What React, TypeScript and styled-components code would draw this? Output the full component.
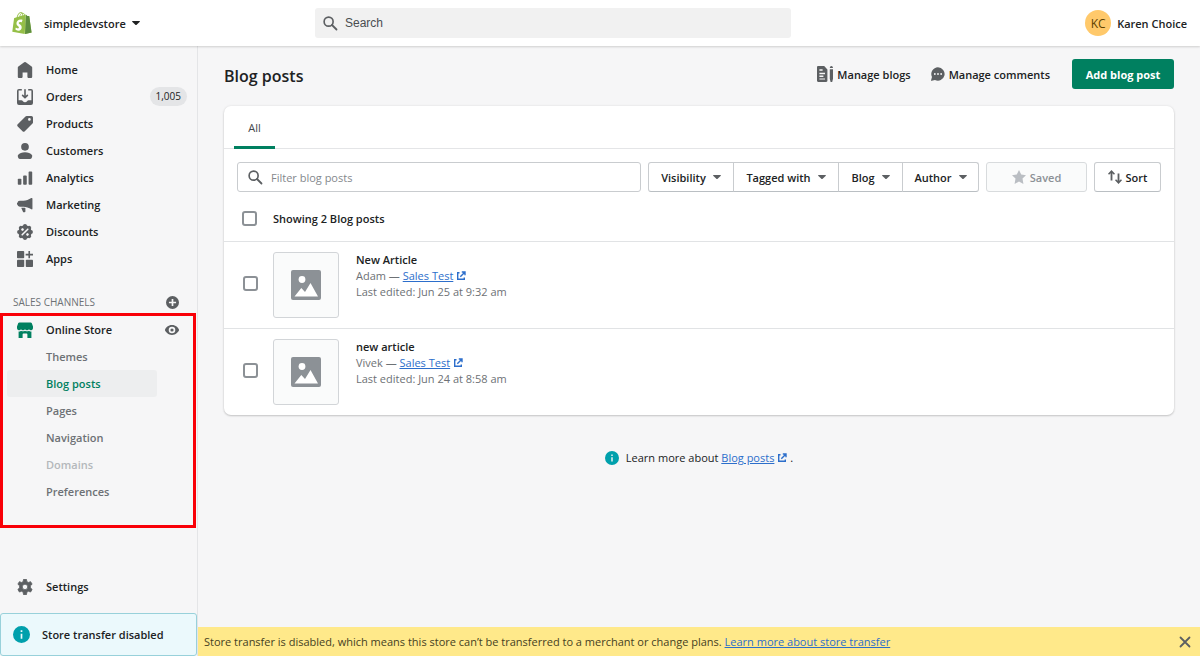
import React from "react";
import styled, { createGlobalStyle, css } from "styled-components";
import { SiShopify } from "react-icons/si";

const Global = createGlobalStyle`
  *, *::before, *::after { box-sizing: border-box; }
  body {
    margin: 0;
    background: #f6f6f7;
    color: #202223;
    font: 400 11px/17px "Open Sans", "Noto Sans", sans-serif;
  }
  button, input { font: inherit; color: inherit; }
  button { cursor: pointer; }
  svg { display: block; flex: none; }
  h1, h2, p, ul { margin: 0; padding: 0; }
  ul { list-style: none; }
`;

const Page = styled.div`
  min-height: 100vh;
  display: grid;
  grid-template: auto 1fr / 198px minmax(0, 1fr);
`;

/* Top bar */
const TopBar = styled.header`
  grid-column: 1 / -1;
  height: 46px;
  display: flex;
  align-items: center;
  padding-right: 13px;
  background: #fff;
  box-shadow: 0 1px 2px rgba(0, 0, 0, 0.16);
  z-index: 1;
`;
const StoreButton = styled.button`
  flex: 0 0 315px;
  display: flex;
  align-items: center;
  padding: 0 0 0 11px;
  border: 0;
  background: none;
  font-weight: 600;
  gap: 6px;
`;
const StoreName = styled.span`
  padding-left: 5px;
`;
const SearchField = styled.label`
  flex: 0 1 476px;
  height: 30px;
  display: flex;
  align-items: center;
  gap: 7px;
  padding: 0 8px;
  border-radius: 3px;
  background: #f1f1f1;
  color: #5c5f62;
`;
const SearchInput = styled.input`
  flex: 1;
  min-width: 0;
  border: 0;
  padding: 0;
  outline: 0;
  background: none;
  font: 12px "Liberation Sans", Arial, sans-serif;
  &::placeholder { color: #4a4d50; opacity: 1; }
`;
const UserButton = styled.button`
  margin-left: auto;
  display: flex;
  align-items: center;
  gap: 6px;
  padding: 0;
  border: 0;
  background: none;
  font-weight: 600;
`;
const Avatar = styled.span`
  width: 26px;
  height: 26px;
  border-radius: 50%;
  display: grid;
  place-items: center;
  background: #ffc96b;
  color: #5e4200;
  font-size: 12px;
  font-weight: 400;
`;

/* Sidebar */
const Sidebar = styled.nav`
  display: flex;
  flex-direction: column;
  padding-top: 10px;
  border-right: 1px solid #e4e5e7;
`;
const NavLink = styled.a<{ $tone?: "sub" | "active" | "disabled" }>`
  height: 27px;
  display: flex;
  align-items: center;
  gap: 13px;
  padding: 0 10px 0 17px;
  color: #202223;
  font-weight: 600;
  text-decoration: none;
  > svg { color: #5c5f62; }
  ${(p) =>
    p.$tone &&
    css`
      margin: 0 36px 0 4px;
      padding: 0 0 0 39px;
      border-radius: 3px;
      color: ${{ sub: "#6d7175", active: "#008060", disabled: "#b4b8bb" }[p.$tone]};
      background: ${p.$tone === "active" ? "#edeeef" : "none"};
    `}
`;
const Badge = styled.span`
  margin-left: auto;
  padding: 1px 6px;
  border-radius: 10px;
  background: #e4e5e7;
  font-size: 10px;
  font-weight: 400;
`;
const SectionHead = styled.div`
  height: 21px;
  margin-top: 20px;
  padding: 0 18px 0 13px;
  display: flex;
  align-items: center;
  justify-content: space-between;
  color: #6d7175;
`;
const SectionTitle = styled.h2`
  font-size: 10px;
  font-weight: 400;
`;
const IconButton = styled.button`
  padding: 0;
  border: 0;
  background: none;
  color: #5c5f62;
`;
const Highlight = styled.section`
  height: 215px;
  margin-right: 1px;
  border: 3px solid #f90007;
`;
const ChannelRow = styled.div`
  display: flex;
  align-items: center;
  justify-content: space-between;
  padding-right: 14px;
  > a { padding-left: 14px; }
  > a > svg { color: #008060; }
`;
const SidebarFoot = styled.div`
  margin-top: auto;
  display: grid;
  gap: 13px;
`;
const TransferNote = styled.div`
  height: 43px;
  display: flex;
  align-items: center;
  gap: 12px;
  padding: 0 12px;
  border: 1px solid #98d1da;
  border-radius: 3px;
  background: #ebf9fc;
  font-weight: 600;
  > svg { color: #00a0ac; }
`;

/* Main column */
const Main = styled.main`
  display: flex;
  flex-direction: column;
`;
const Content = styled.div`
  flex: 1;
  padding: 13px 26px;
`;
const TitleRow = styled.div`
  height: 30px;
  display: flex;
  align-items: center;
  gap: 20px;
`;
const Title = styled.h1`
  margin-right: auto;
  padding-top: 4px;
  font-size: 16px;
  line-height: 24px;
  font-weight: 600;
`;
const ActionLink = styled.a`
  display: flex;
  align-items: center;
  gap: 4px;
  color: #202223;
  font-weight: 600;
  text-decoration: none;
  > svg { color: #5c5f62; }
`;
const PrimaryButton = styled.button`
  min-width: 102px;
  height: 30px;
  margin-left: 2px;
  padding: 0 12px;
  border: 0;
  border-radius: 3px;
  background: #008060;
  color: #fff;
  font-weight: 700;
`;
const Card = styled.section`
  margin-top: 17px;
  border-radius: 7px;
  background: #fff;
  box-shadow: 0 0 3px rgba(23, 24, 24, 0.08), 0 1px 2px rgba(0, 0, 0, 0.18);
`;
const Tabs = styled.div`
  height: 43px;
  display: flex;
  padding-left: 10px;
  border-bottom: 1px solid #e4e5e7;
`;
const Tab = styled.button`
  width: 41px;
  height: 43px;
  padding: 3px 0 0;
  border: 0;
  border-bottom: 3px solid #008060;
  border-radius: 2px 2px 0 0;
  background: none;
  color: #44474a;
`;
const Filters = styled.div`
  display: flex;
  gap: 7px;
  padding: 13px 13px 11px;
`;
const FilterField = styled.label`
  flex: 1;
  min-width: 0;
  height: 30px;
  display: flex;
  align-items: center;
  gap: 8px;
  padding: 0 10px;
  border: 1px solid #c9cccf;
  border-radius: 3px;
  color: #5c5f62;
`;
const FilterInput = styled.input`
  flex: 1;
  min-width: 0;
  padding: 0;
  border: 0;
  outline: 0;
  background: none;
  &::placeholder { color: #84888c; opacity: 1; }
`;
const ButtonGroup = styled.div`
  display: flex;
  > button { margin-left: -1px; border-radius: 0; }
  > button:first-child { margin-left: 0; border-radius: 3px 0 0 3px; }
  > button:last-child { border-radius: 0 3px 3px 0; }
`;
const ToolButton = styled.button<{ $width: number }>`
  width: ${(p) => p.$width}px;
  height: 30px;
  display: flex;
  align-items: center;
  justify-content: center;
  gap: 7px;
  padding: 0;
  border: 1px solid #c9cccf;
  border-bottom-color: #babfc3;
  border-radius: 3px;
  background: #fff;
  font-weight: 600;
  white-space: nowrap;
  > svg { color: #5c5f62; }
  &:disabled {
    border-color: #d8dbdd;
    background: #fafbfb;
    color: #8c9196;
    cursor: default;
    > svg { color: #babec3; }
  }
`;
const IconToolButton = styled(ToolButton)`
  gap: 4px;
`;
const Check = styled.input.attrs({ type: "checkbox" })`
  appearance: none;
  flex: none;
  width: 15px;
  height: 15px;
  margin: 0;
  border: 2px solid #8c9196;
  border-radius: 3px;
  background: #fff;
  &:checked { background: #008060; border-color: #008060; }
`;
const SelectAll = styled.label`
  height: 38px;
  display: flex;
  align-items: center;
  gap: 16px;
  padding: 0 18px 7px;
  font-weight: 600;
`;
const PostRow = styled.li`
  display: flex;
  align-items: center;
  padding: 10px 19px;
  border-top: 1px solid #e1e3e5;
  > input { margin-bottom: 3px; }
`;
const Thumb = styled.div`
  width: 66px;
  height: 66px;
  margin: 0 17px 0 15px;
  display: grid;
  place-items: center;
  border: 1px solid #d2d5d8;
  border-radius: 3px;
  background: #fafbfb;
  color: #8c9196;
`;
const PostText = styled.div`
  align-self: flex-start;
  line-height: 16px;
  color: #6d7175;
`;
const PostTitle = styled.h2`
  font: inherit;
  font-weight: 600;
  color: #202223;
`;
const TextLink = styled.a`
  color: #2c6ecb;
  text-decoration: underline;
  > svg {
    display: inline-block;
    margin-left: 3px;
    vertical-align: -1px;
  }
`;
const HelpRow = styled.p`
  margin-top: 34px;
  display: flex;
  align-items: center;
  justify-content: center;
  gap: 7px;
  > svg { color: #00a0ac; }
`;
const Banner = styled.div`
  height: 29px;
  display: flex;
  align-items: center;
  justify-content: space-between;
  padding: 0 8px 0 6px;
  background: #ffe98a;
  color: #45411f;
`;

/* Icons, drawn on a 20 unit grid */
type IconProps = { size?: number; children: React.ReactNode };
const Icon = ({ size = 16, children }: IconProps) => (
  <svg width={size} height={size} viewBox="0 0 20 20" fill="currentColor" fillRule="evenodd" aria-hidden="true">
    {children}
  </svg>
);
const Caret = () => (
  <svg width="8" height="4" viewBox="0 0 8 4" fill="currentColor" aria-hidden="true">
    <path d="M.6 0h6.8c.5 0 .7.5.4.8L4.4 3.9a.6.6 0 0 1-.8 0L.2.8C-.1.5.1 0 .6 0z" />
  </svg>
);
const SearchIcon = () => (
  <svg width="15" height="15" viewBox="0 0 20 20" fill="none" stroke="currentColor" aria-hidden="true">
    <circle cx="7.5" cy="7.5" r="6" strokeWidth="2.2" />
    <path d="M12 12l6 6" strokeWidth="2.4" strokeLinecap="round" />
  </svg>
);
const InfoIcon = ({ size }: { size: number }) => (
  <Icon size={size}>
    <path d="M10 0a10 10 0 1 0 0 20 10 10 0 0 0 0-20zM9 5h2v2H9zm0 4h2v6H9z" />
  </Icon>
);
const ExternalIcon = () => (
  <svg width="10" height="10" viewBox="0 0 10 10" fill="none" stroke="currentColor" strokeWidth="1.4" aria-hidden="true">
    <path d="M3.5 1.700H1.700v6.600h6.600V6.600M4.300 5.700L8.500 1.500M5.800 1h3.200v3.200" />
  </svg>
);
const ImageIcon = () => (
  <svg width="30" height="30" viewBox="0 0 30 30" aria-hidden="true">
    <rect width="30" height="30" rx="2" fill="currentColor" />
    <circle cx="11" cy="9.5" r="3.4" fill="#fff" />
    <path d="M3.500 26.500l6.800-8.500 3.700 4 5.500-9 7.500 13.500z" fill="#fff" />
  </svg>
);
const ShopLogo = () => (
  <svg width="22" height="24" viewBox="0 0 24 24" aria-hidden="true">
    <path d="M5 8h9v13H5z" fill="#fff" />
    <SiShopify size={24} color="#95bf47" />
    <path
      fill="#5e8e3e"
      d="M15.337 23.979l7.216-1.561S19.949 4.805 19.928 4.688c-.018-.116-.114-.192-.211-.192s-1.929-.136-1.929-.136-1.275-1.274-1.439-1.411c-.045-.037-.075-.057-.121-.074l-.914 21.104z"
    />
  </svg>
);

const eight = [0, 45, 90, 135, 180, 225, 270, 315];
const glyphs = {
  home: <path d="M19 6.800V18.300c0 .9-.7 1.700-1.700 1.700h-2.600c-.9 0-1.700-.7-1.700-1.700V13H7v5.300c0 .9-.7 1.700-1.700 1.700H2.700C1.700 20 1 19.300 1 18.300V6.800c0-.5.3-1 .7-1.300L9 .4a1.700 1.700 0 0 1 2 0l7.300 5.100c.4.3.7.800.7 1.300z" />,
  orders: (
    <>
      <path d="M11 1a1 1 0 1 0-2 0v7.586L7.707 7.293a1 1 0 0 0-1.414 1.414l3 3a1 1 0 0 0 1.414 0l3-3a1 1 0 0 0-1.414-1.414L11 8.586V1z" />
      <path d="M2.500 0A2.500 2.500 0 0 0 0 2.500v15A2.500 2.500 0 0 0 2.500 20h15a2.500 2.500 0 0 0 2.500-2.500v-15A2.500 2.500 0 0 0 17.500 0H14v2h4v12h-3.500c-.8 0-1.400.7-1.900 1.200-.7.800-1.500 1.300-2.600 1.300s-1.900-.5-2.600-1.300C6.900 14.700 6.300 14 5.500 14H2V2h4V0z" />
    </>
  ),
  products: <path d="M10.600.6A2 2 0 0 1 12 0h6a2 2 0 0 1 2 2v6a2 2 0 0 1-.6 1.400l-9.700 9.700a2 2 0 0 1-2.800 0l-6-6a2 2 0 0 1 0-2.800zM15.500 6a1.700 1.700 0 1 0 0-3.400 1.700 1.700 0 0 0 0 3.400z" />,
  customers: (
    <>
      <circle cx="10" cy="4.8" r="4.8" />
      <path d="M1.600 14.600C3.100 13.300 6 11.600 10 11.600s6.900 1.700 8.400 3c.6.500.8 1.300.6 2.100l-.4 1.500A2.200 2.200 0 0 1 16.500 20h-13a2.200 2.200 0 0 1-2.100-1.800L1 16.700c-.2-.8 0-1.600.6-2.100z" />
    </>
  ),
  analytics: (
    <>
      <rect x="1" y="11" width="4.5" height="7.5" rx="1" />
      <rect x="7.7" y="7" width="4.5" height="11.5" rx="1" />
      <rect x="14.5" y="2" width="4.5" height="16.5" rx="1" />
    </>
  ),
  marketing: (
    <>
      <path d="M18.400 1.100a.9.900 0 0 1 .9.900v12.600a.9.900 0 0 1-1.300.8c-3.200-2-6.500-3-10-3.200H3.500A3.300 3.300 0 0 1 .4 9.500H0v-2h.4a3.300 3.300 0 0 1 3.100-2.700H8c3.500-.3 6.700-1.400 9.900-3.500z" />
      <path d="M5.500 13.500h3c.7 0 1.300.1 2 .2v4.500c0 .6-.4 1-1 1h-1a1 1 0 0 1-.9-.6L5.500 14z" />
    </>
  ),
  discounts: (
    <>
      <circle cx="10" cy="10" r="8.3" />
      {eight.map((a) => (
        <circle key={a} cx="10" cy="2.6" r="2.5" transform={`rotate(${a} 10 10)`} />
      ))}
      <g fill="#f6f6f7" stroke="#f6f6f7">
        <circle cx="6.9" cy="6.9" r="1.2" />
        <circle cx="13.1" cy="13.1" r="1.2" />
        <path d="M6.500 13.500l7-7" strokeWidth="2" strokeLinecap="round" />
      </g>
    </>
  ),
  apps: (
    <>
      <rect x="0" y="0" width="9" height="9" rx="1" />
      <rect x="0" y="11" width="9" height="9" rx="1" />
      <rect x="11" y="11" width="9" height="9" rx="1" />
      <path d="M14.300 0h2v3.500h3.700v2h-3.700V9h-2V5.500h-3.500v-2h3.500z" />
    </>
  ),
  store: (
    <>
      <path d="M3 .5h14c.6 0 1.100.3 1.400.8L20 5.500v2.200a2.700 2.700 0 0 1-5 1.300 2.900 2.900 0 0 1-5 0 2.900 2.900 0 0 1-5 0 2.700 2.700 0 0 1-5-1.300V5.500l1.600-4.200C1.900.8 2.400.5 3 .5z" />
      <path d="M2 12c1.200 0 2.300-.4 3-1.200a4.500 4.500 0 0 0 5 0 4.500 4.500 0 0 0 5 0c.8.800 1.800 1.200 3 1.200v8h-5v-4.500c0-.6-.4-1-1-1H8c-.6 0-1 .4-1 1V20H2z" />
    </>
  ),
  settings: (
    <path d="M8.200.4h3.600l.6 2.900 1.800 1 2.800-1 1.900 3.200-2.200 2v2.500l2.200 2-1.900 3.300-2.800-1-1.800 1-.6 3.300H8.200l-.6-3.300-1.800-1-2.800 1L1.100 13l2.200-2V8.500l-2.200-2L3 3.300l2.800 1 1.800-1zM10 6.500a3.400 3.400 0 1 0 0 6.800 3.400 3.400 0 0 0 0-6.800z" stroke="currentColor" strokeLinejoin="round" />
  ),
};

const mainNav: { label: string; icon: keyof typeof glyphs; badge?: string }[] = [
  { label: "Home", icon: "home" },
  { label: "Orders", icon: "orders", badge: "1,005" },
  { label: "Products", icon: "products" },
  { label: "Customers", icon: "customers" },
  { label: "Analytics", icon: "analytics" },
  { label: "Marketing", icon: "marketing" },
  { label: "Discounts", icon: "discounts" },
  { label: "Apps", icon: "apps" },
];
const storeNav: { label: string; tone: "sub" | "active" | "disabled" }[] = [
  { label: "Themes", tone: "sub" },
  { label: "Blog posts", tone: "active" },
  { label: "Pages", tone: "sub" },
  { label: "Navigation", tone: "sub" },
  { label: "Domains", tone: "disabled" },
  { label: "Preferences", tone: "sub" },
];
const filters = [
  { label: "Visibility", width: 86 },
  { label: "Tagged with", width: 106 },
  { label: "Blog", width: 65 },
  { label: "Author", width: 77 },
];
const posts = [
  { title: "New Article", author: "Adam", edited: "Jun 25 at 9:32 am" },
  { title: "new article", author: "Vivek", edited: "Jun 24 at 8:58 am" },
];

export default function App() {
  return (
    <>
      <Global />
      <Page>
        <TopBar>
          <StoreButton>
            <ShopLogo />
            <StoreName>simpledevstore</StoreName>
            <Caret />
          </StoreButton>
          <SearchField>
            <SearchIcon />
            <SearchInput type="text" placeholder="Search" aria-label="Search" />
          </SearchField>
          <UserButton>
            <Avatar>KC</Avatar>
            Karen Choice
          </UserButton>
        </TopBar>

        <Sidebar aria-label="Main">
          <ul>
            {mainNav.map((item) => (
              <li key={item.label}>
                <NavLink href="#">
                  <Icon>{glyphs[item.icon]}</Icon>
                  {item.label}
                  {item.badge && <Badge>{item.badge}</Badge>}
                </NavLink>
              </li>
            ))}
          </ul>
          <SectionHead>
            <SectionTitle>SALES CHANNELS</SectionTitle>
            <IconButton aria-label="Add sales channel">
              <Icon size={13}>
                <path d="M10 0a10 10 0 1 0 0 20 10 10 0 0 0 0-20zM8.700 4.500h2.600v4.200h4.200v2.600h-4.200v4.200H8.700v-4.200H4.500V8.700h4.200z" />
              </Icon>
            </IconButton>
          </SectionHead>
          <Highlight>
            <ChannelRow>
              <NavLink href="#">
                <Icon>{glyphs.store}</Icon>
                Online Store
              </NavLink>
              <IconButton aria-label="View online store">
                <Icon size={14}>
                  <path d="M10 3C4.500 3 1.200 7 .1 9.300a1.600 1.600 0 0 0 0 1.400C1.200 13 4.500 17 10 17s8.800-4 9.900-6.300a1.600 1.600 0 0 0 0-1.400C18.800 7 15.500 3 10 3zm0 2.300a4.700 4.700 0 1 1 0 9.400 4.700 4.700 0 0 1 0-9.400zm0 2.400a2.300 2.300 0 1 0 0 4.600 2.300 2.300 0 0 0 0-4.600z" />
                </Icon>
              </IconButton>
            </ChannelRow>
            <ul>
              {storeNav.map((item) => (
                <li key={item.label}>
                  <NavLink href="#" $tone={item.tone}>{item.label}</NavLink>
                </li>
              ))}
            </ul>
          </Highlight>
          <SidebarFoot>
            <NavLink href="#">
              <Icon>{glyphs.settings}</Icon>
              Settings
            </NavLink>
            <TransferNote>
              <InfoIcon size={17} />
              Store transfer disabled
            </TransferNote>
          </SidebarFoot>
        </Sidebar>

        <Main>
          <Content>
            <TitleRow>
              <Title>Blog posts</Title>
              <ActionLink href="#">
                <Icon>
                  <path d="M1.500 0H9l4 4.500v14c0 .8-.6 1.500-1.500 1.500h-10C.7 20 0 19.300 0 18.500v-17C0 .7.7 0 1.500 0zM3 4v1.800h4V4zm0 4.500v1.800h7V8.500zM3 12v1.800h5V12zm0 3.500v1.500h7v-1.500zM16 2.500c0-1.300 1-2.500 2-2.500s2 1.200 2 2.500zM16 4h4v12l-1 4h-2l-1-4z" />
                </Icon>
                Manage blogs
              </ActionLink>
              <ActionLink href="#">
                <Icon size={14}>
                  <path d="M10 .5a9.500 9.500 0 1 1-4.300 18L1 19.800c-.6.200-1.100-.4-.9-1l1.300-4.500A9.500 9.500 0 0 1 10 .5zM5.500 8.700a1.300 1.300 0 1 0 0 2.600 1.300 1.300 0 0 0 0-2.600zm4.500 0a1.300 1.300 0 1 0 0 2.600 1.300 1.300 0 0 0 0-2.600zm4.500 0a1.300 1.300 0 1 0 0 2.600 1.300 1.300 0 0 0 0-2.600z" />
                </Icon>
                Manage comments
              </ActionLink>
              <PrimaryButton>Add blog post</PrimaryButton>
            </TitleRow>

            <Card>
              <Tabs role="tablist">
                <Tab role="tab" aria-selected="true">All</Tab>
              </Tabs>
              <Filters>
                <FilterField>
                  <SearchIcon />
                  <FilterInput type="text" placeholder="Filter blog posts" aria-label="Filter blog posts" />
                </FilterField>
                <ButtonGroup>
                  {filters.map((f) => (
                    <ToolButton key={f.label} $width={f.width} aria-haspopup="true">
                      {f.label}
                      <Caret />
                    </ToolButton>
                  ))}
                </ButtonGroup>
                <IconToolButton $width={101} disabled>
                  <Icon size={14}>
                    <path d="M10 0l3.200 6.500 6.800.9-5 4.900L16.300 20 10 16.300 3.700 20 5 12.300 0 7.400l6.800-.9z" />
                  </Icon>
                  Saved
                </IconToolButton>
                <IconToolButton $width={67}>
                  <Icon size={14}>
                    <path d="M5 0l5 5.200-1.500 1.500L6.300 4.500V15H3.700V4.500L1.500 6.700 0 5.200zM15 20l-5-5.200 1.500-1.500 2.200 2.200V5h2.600v10.500l2.200-2.200 1.500 1.500z" />
                  </Icon>
                  Sort
                </IconToolButton>
              </Filters>
              <SelectAll>
                <Check />
                Showing 2 Blog posts
              </SelectAll>
              <ul>
                {posts.map((post) => (
                  <PostRow key={post.title}>
                    <Check aria-label={`Select ${post.title}`} />
                    <Thumb>
                      <ImageIcon />
                    </Thumb>
                    <PostText>
                      <PostTitle>{post.title}</PostTitle>
                      <p>
                        {post.author} — <TextLink href="#">Sales Test<ExternalIcon /></TextLink>
                      </p>
                      <p>Last edited: {post.edited}</p>
                    </PostText>
                  </PostRow>
                ))}
              </ul>
            </Card>

            <HelpRow>
              <InfoIcon size={14} />
              <span>
                Learn more about <TextLink href="#">Blog posts<ExternalIcon /></TextLink> .
              </span>
            </HelpRow>
          </Content>
          <Banner role="status">
            <span>
              Store transfer is disabled, which means this store can’t be transferred to a merchant or change plans.{" "}
              <TextLink href="#">Learn more about store transfer</TextLink>
            </span>
            <IconButton aria-label="Dismiss">
              <svg width="14" height="14" viewBox="0 0 14 14" fill="none" stroke="currentColor" strokeWidth="1.8" strokeLinecap="round" aria-hidden="true">
                <path d="M2.500 2.500l9 9M11.500 2.500l-9 9" />
              </svg>
            </IconButton>
          </Banner>
        </Main>
      </Page>
    </>
  );
}
